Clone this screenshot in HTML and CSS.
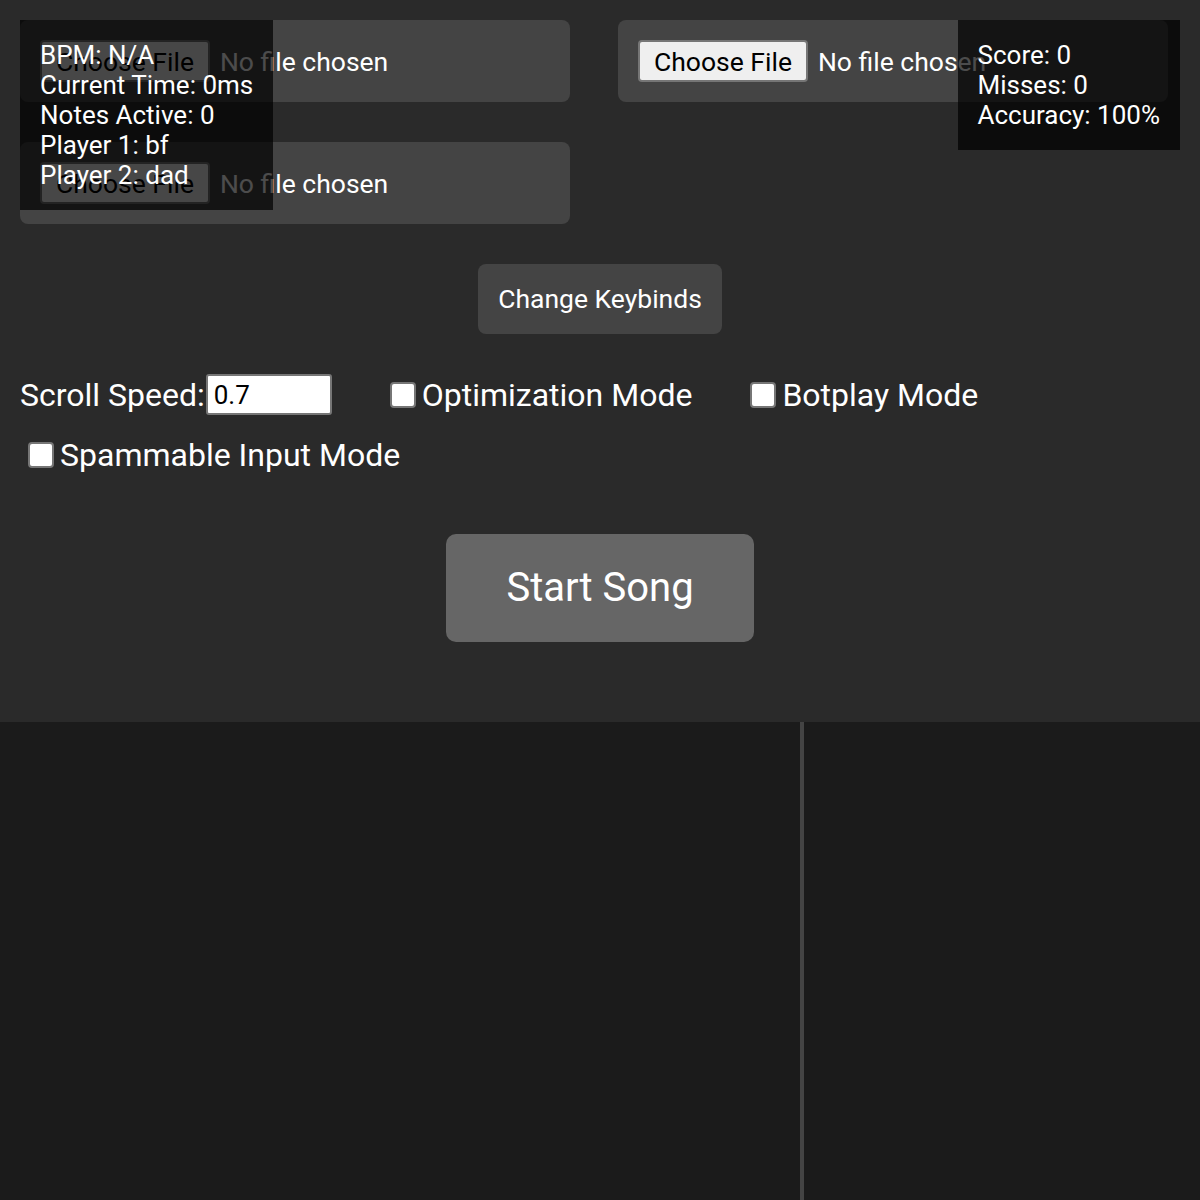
FILE: index.html
```html
<!DOCTYPE html>
<html lang="en">
<head>
<meta charset="utf-8">
<title>Rhythm Game</title>
<link rel="stylesheet" href="styles.css">
</head>
<body>
<div class="menu">
  <div class="files">
    <input class="file" type="file" aria-label="Chart file">
    <input class="file" type="file" aria-label="Instrumental file">
    <input class="file" type="file" aria-label="Vocals file">
  </div>
  <div class="center keybinds-row">
    <button class="keybinds">Change Keybinds</button>
  </div>
  <div class="options">
    <label class="opt">Scroll Speed:<input class="speed" type="text" value="0.7"></label>
    <label class="opt"><input class="check" type="checkbox">Optimization Mode</label>
    <label class="opt"><input class="check" type="checkbox">Botplay Mode</label>
    <label class="opt"><input class="check" type="checkbox">Spammable Input Mode</label>
  </div>
  <div class="center start-row">
    <button class="start">Start Song</button>
  </div>
</div>
<div class="game">
  <div class="lane lane-left"></div>
  <div class="lane lane-right"></div>
</div>
<div class="hud hud-left">
  <div>BPM: N/A</div>
  <div>Current Time: 0ms</div>
  <div>Notes Active: 0</div>
  <div>Player 1: bf</div>
  <div>Player 2: dad</div>
</div>
<div class="hud hud-right">
  <div>Score: 0</div>
  <div>Misses: 0</div>
  <div>Accuracy: 100%</div>
</div>
</body>
</html>
```

FILE: styles.css
```css
html, body {
  margin: 0;
  padding: 0;
  height: 100%;
}
body {
  background: #1b1b1b;
  color: #fff;
  font-family: Roboto, "Liberation Sans", sans-serif;
  display: flex;
  flex-direction: column;
  overflow: hidden;
}
.menu {
  background: #2a2a2a;
  padding: 20px 20px 80px 20px;
}
.files {
  display: flex;
  flex-wrap: wrap;
  gap: 40px 48px;
}
.file {
  box-sizing: border-box;
  width: 550px;
  height: 82px;
  padding: 20px;
  background: #444;
  border-radius: 8px;
  color: #fff;
  font-family: Roboto, "Liberation Sans", sans-serif;
  font-size: 26.5px;
  overflow: hidden;
}
.file::file-selector-button {
  font-family: Roboto, "Liberation Sans", sans-serif;
  font-size: 26.5px;
  height: 42px;
  padding: 0 14px;
  margin-right: 10px;
  background: #efefef;
  color: #000;
  border: 2px solid #767676;
  border-radius: 4px;
}
.center {
  display: flex;
  justify-content: center;
}
.keybinds-row {
  margin-top: 40px;
}
.keybinds {
  font-family: Roboto, "Liberation Sans", sans-serif;
  font-size: 26.5px;
  line-height: 30px;
  padding: 20px;
  background: #444;
  color: #fff;
  border: none;
  border-radius: 8px;
}
.options {
  margin-top: 40px;
  display: flex;
  flex-wrap: wrap;
  gap: 20px 50px;
  font-size: 32px;
}
.opt {
  display: flex;
  align-items: center;
  min-height: 40px;
}
.speed {
  box-sizing: border-box;
  width: 126px;
  height: 41px;
  margin-left: 1px;
  padding: 0 6px;
  font-family: Roboto, "Liberation Sans", sans-serif;
  font-size: 26px;
  color: #000;
  background: #fff;
  border: 2px solid #767676;
  border-radius: 3px;
}
.check {
  appearance: none;
  -webkit-appearance: none;
  box-sizing: border-box;
  width: 26px;
  height: 26px;
  margin: 0 6px 0 8px;
  background: #fff;
  border: 2px solid #767676;
  border-radius: 4px;
}
.start-row {
  margin-top: 59px;
}
.start {
  font-family: Roboto, "Liberation Sans", sans-serif;
  font-size: 40px;
  line-height: 48px;
  padding: 30px 60px;
  background: #666;
  color: #fff;
  border: none;
  border-radius: 10px;
}
.game {
  flex: 1;
  display: flex;
  background: #1b1b1b;
}
.lane-left {
  width: 800px;
  border-right: 4px solid #444;
}
.lane-right {
  flex: 1;
}
.hud {
  position: absolute;
  top: 20px;
  padding: 20px;
  background: rgba(0, 0, 0, 0.7);
  font-size: 26px;
  line-height: 30px;
  color: #fff;
}
.hud-left {
  left: 20px;
}
.hud-right {
  right: 20px;
}
```
